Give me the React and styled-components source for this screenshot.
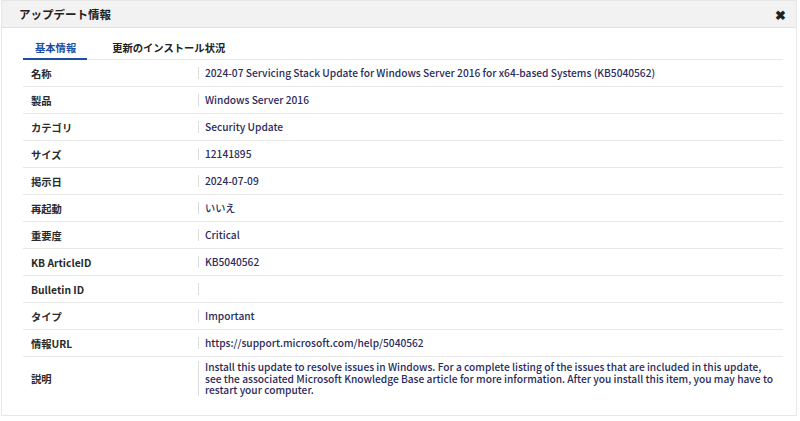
import React from 'react';
import styled, { createGlobalStyle } from 'styled-components';

const GlobalStyle = createGlobalStyle`
  html, body {
    margin: 0;
    padding: 0;
    background: #fff;
  }
  body {
    font-family: "Noto Sans CJK JP", "Noto Sans", sans-serif;
  }
`;

const Dialog = styled.div`
  width: 794px;
  height: 414px;
  margin: 0 0 0 1px;
  border: 1px solid #e6e6e6;
  background: #fff;
  display: flex;
  flex-direction: column;
`;

const Header = styled.div`
  height: 26px;
  flex: none;
  background: #f2f2f2;
  border-bottom: 1px solid #e2e2e2;
  display: flex;
  align-items: center;
  justify-content: space-between;
  padding: 0 10px 0 17px;
`;

const Title = styled.div`
  font-size: 11.5px;
  color: #222;
  font-weight: 700;
`;

const Close = styled.span`
  font-size: 13px;
  font-weight: 700;
  color: #222;
  line-height: 1;
`;

const Body = styled.div`
  padding: 10px 13px 0 21px;
`;

const Tabs = styled.div`
  display: flex;
  border-bottom: 1px solid #e8e8e8;
`;

const Tab = styled.div`
  font-size: 10.3px;
  height: 22px;
  line-height: 20px;
  padding: 0 ${p => (p.$active ? '11px' : '0')} 0 ${p => (p.$active ? '12px' : '25px')};
  color: ${p => (p.$active ? '#1c4da1' : '#222')};
  font-weight: 700;
  border-bottom: 2px solid ${p => (p.$active ? '#1c4da1' : 'transparent')};
  margin-bottom: -1px;
  box-sizing: border-box;
`;

const Row = styled.div`
  display: grid;
  grid-template-columns: 175px 1fr;
  align-items: center;
  min-height: 26px;
  border-bottom: 1px solid #e8e8e8;
  &:last-child {
    border-bottom: none;
    padding: 4px 0;
  }
`;

const Label = styled.div`
  font-size: 10.3px;
  color: #2a2a2a;
  padding-left: 8px;
  font-weight: 700;
`;

const Value = styled.div`
  font-size: 10.2px;
  color: #2b2b5c;
  line-height: 11.5px;
  padding: 0 10px 0 6px;
  font-weight: 500;
  border-left: 1px solid #dcdcdc;
  min-height: 12px;
  display: flex;
  align-items: center;
`;

const rows = [
  ['名称', '2024-07 Servicing Stack Update for Windows Server 2016 for x64-based Systems (KB5040562)'],
  ['製品', 'Windows Server 2016'],
  ['カテゴリ', 'Security Update'],
  ['サイズ', '12141895'],
  ['掲示日', '2024-07-09'],
  ['再起動', 'いいえ'],
  ['重要度', 'Critical'],
  ['KB ArticleID', 'KB5040562'],
  ['Bulletin ID', ''],
  ['タイプ', 'Important'],
  ['情報URL', 'https://support.microsoft.com/help/5040562'],
  [
    '説明',
    'Install this update to resolve issues in Windows. For a complete listing of the issues that are included in this update, see the associated Microsoft Knowledge Base article for more information. After you install this item, you may have to restart your computer.',
  ],
];

export default function App() {
  return (
    <>
      <GlobalStyle />
      <Dialog>
        <Header>
          <Title>アップデート情報</Title>
          <Close>✖</Close>
        </Header>
        <Body>
          <Tabs>
            <Tab $active>基本情報</Tab>
            <Tab>更新のインストール状況</Tab>
          </Tabs>
          {rows.map(([label, value]) => (
            <Row key={label}>
              <Label>{label}</Label>
              <Value>{value}</Value>
            </Row>
          ))}
        </Body>
      </Dialog>
    </>
  );
}
